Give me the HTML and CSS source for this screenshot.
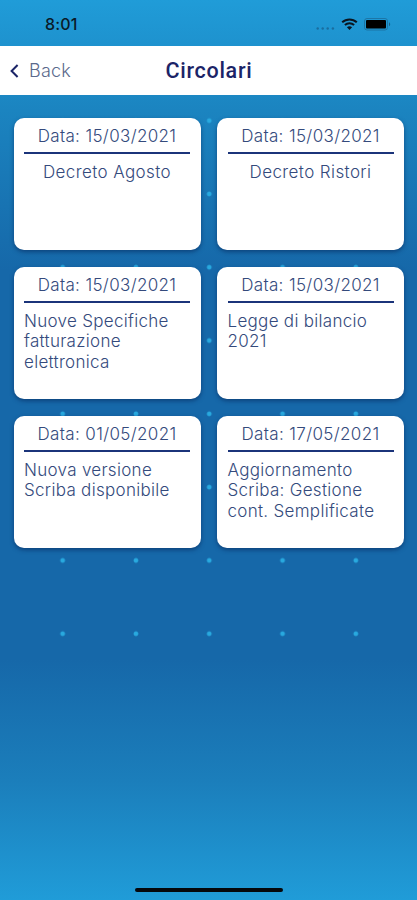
FILE: index.html
```html
<!DOCTYPE html>
<html lang="it">
<head>
    <meta charset="UTF-8">
    <meta name="viewport" content="width=device-width, initial-scale=1.0">
    <title>Circolari</title>
    <link rel="stylesheet" href="styles.css">
</head>
<body>

<div class="screen">
    <div class="status-bar">
        <span class="time">8:01</span>
        <div class="status-icons">
            <svg class="signal" width="19" height="3" viewBox="0 0 19 3">
                <circle cx="1.7" cy="1.5" r="1.2"/>
                <circle cx="6.7" cy="1.5" r="1.2"/>
                <circle cx="11.7" cy="1.5" r="1.2"/>
                <circle cx="16.9" cy="1.5" r="1.2"/>
            </svg>
            <svg class="wifi" width="17" height="12" viewBox="0 0 17 12">
                <path d="M1.2 4.3C5.3.4 11.7.4 15.8 4.3M3.9 7c2.6-2.4 6.6-2.4 9.2 0" fill="none" stroke="#0a1520" stroke-width="2"/>
                <path d="M8.5 12L5.9 9.3c1.5-1.3 3.7-1.3 5.2 0z" fill="#0a1520"/>
            </svg>
            <svg class="battery" width="27" height="13" viewBox="0 0 27 13">
                <rect x=".5" y=".5" width="23" height="11.5" rx="2.5" fill="none" stroke="#1a5f88" stroke-opacity=".6"/>
                <rect x="2" y="2" width="20" height="8.5" rx="1" fill="#000"/>
                <path d="M25 4.2c1.6.8 1.6 3.3 0 4.1z" fill="#1a5f88"/>
            </svg>
        </div>
    </div>

    <div class="header">
        <a class="back" href="#">
            <svg width="9" height="14" viewBox="0 0 9 14">
                <path d="M7.6 1L1.6 7l6 6" fill="none" stroke="#1b2467" stroke-width="2"/>
            </svg>
            <span>Back</span>
        </a>
        <h1>Circolari</h1>
    </div>

    <div class="cards">
        <div class="card">
            <div class="date">Data: 15/03/2021</div>
            <p class="center">Decreto Agosto</p>
        </div>
        <div class="card">
            <div class="date">Data: 15/03/2021</div>
            <p class="center">Decreto Ristori</p>
        </div>
        <div class="card">
            <div class="date">Data: 15/03/2021</div>
            <p>Nuove Specifiche fatturazione elettronica</p>
        </div>
        <div class="card">
            <div class="date">Data: 15/03/2021</div>
            <p>Legge di bilancio 2021</p>
        </div>
        <div class="card">
            <div class="date">Data: 01/05/2021</div>
            <p>Nuova versione Scriba disponibile</p>
        </div>
        <div class="card">
            <div class="date">Data: 17/05/2021</div>
            <p>Aggiornamento Scriba: Gestione cont. Semplificate</p>
        </div>
    </div>

    <div class="home-indicator"></div>
</div>

</body>
</html>
```
FILE: styles.css
```css
* {
    box-sizing: border-box;
}
body {
    margin: 0;
    font-family: Inter, "Liberation Sans", sans-serif;
    color: #344a7c;
}
.screen {
    position: relative;
    z-index: 0;
    display: flex;
    flex-direction: column;
    height: 900px;
    overflow: hidden;
    background: linear-gradient(#209cd8 0, #1b84c0 110px, #1668a9 270px, #1668a9 660px, #1b7ebb 780px, #209cd8 900px);
}
/* dot pattern behind the cards */
.screen::before {
    content: "";
    position: absolute;
    z-index: -1;
    left: 25.5px;
    top: 84.4px;
    width: 366.5px;
    height: 586.4px;
    background: radial-gradient(circle, #28a9df 1.9px, transparent 2.8px) 0 0 / 73.3px 73.3px;
}
.status-bar {
    display: flex;
    justify-content: space-between;
    height: 46px;
    padding: 0 26px 0 45px;
}
.time {
    padding-top: 14px;
    font-size: 16px;
    line-height: 20px;
    font-weight: 500;
    letter-spacing: 0.2px;
    color: #0a1a28;
}
.status-icons {
    display: flex;
    padding-top: 18px;
}
.signal {
    margin: 9px 6px 0 0;
    fill: #1a6d9f;
}
.wifi {
    margin-right: 6px;
}
.header {
    display: grid;
    grid-template-columns: 1fr auto 1fr;
    align-items: center;
    height: 49px;
    padding: 0 9px 0 10px;
    background-color: white;
}
.back {
    display: flex;
    align-items: center;
    gap: 10px;
    color: #5b6a8c;
    font-size: 18px;
    font-weight: 300;
    letter-spacing: 0.2px;
    text-decoration: none;
}
h1 {
    margin: 0;
    color: #1b2467;
    font-family: Roboto, sans-serif;
    font-size: 21.5px;
    font-weight: 500;
    line-height: 24px;
    letter-spacing: 0.7px;
}
.cards {
    display: grid;
    grid-template-columns: 1fr 1fr;
    grid-auto-rows: 132px;
    gap: 17px 16.5px;
    padding: 23px 13px 0 13.5px;
}
.card {
    padding: 7px 10.5px 0;
    background-color: white;
    border-radius: 10px;
    box-shadow: 0 2px 4px rgba(5, 35, 85, 0.55);
    font-size: 17px;
    font-weight: 300;
    letter-spacing: 0.3px;
}
.date {
    height: 29px;
    border-bottom: 2px solid #1b347a;
    line-height: 22px;
    letter-spacing: 0.35px;
    text-align: center;
}
.card p {
    margin: 8px 0 0;
    line-height: 20.4px;
}
.card .center {
    letter-spacing: 0.4px;
    text-align: center;
}
.home-indicator {
    width: 148px;
    height: 4px;
    margin: auto auto 8px;
    border-radius: 2px;
    background-color: #05080c;
}
```
